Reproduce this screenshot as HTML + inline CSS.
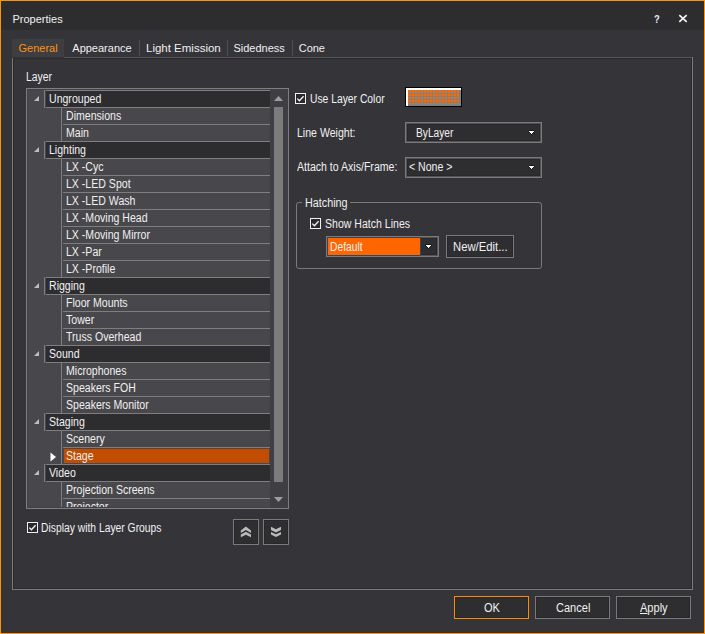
<!DOCTYPE html>
<html><head><meta charset="utf-8"><style>
html,body{margin:0;padding:0;width:705px;height:634px;overflow:hidden;background:#353439}
.a{position:absolute}
.t{position:absolute;white-space:nowrap;font-family:"Liberation Sans", sans-serif}
</style></head><body>
<div class="a" style="left:0px;top:0px;width:705px;height:634px;background:#ff9400;"></div><div class="a" style="left:1px;top:1px;width:703px;height:632px;background:#353439;"></div><div class="a" style="left:1px;top:1px;width:703px;height:29px;background:#2d2d30;"></div><div class="t" style="left:12.5px;top:9.36px;font-size:11px;line-height:20px;color:#f0f0f0;">Properties</div><div class="t" style="left:653.6px;top:9.36px;font-size:11px;line-height:20px;color:#e6ecf4;transform:scaleX(0.85);transform-origin:0 0;font-weight:bold;">?</div><svg class="a" style="left:678px;top:14px" width="10" height="9"><path d="M1.3 1.1L8.7 7.9M8.7 1.1L1.3 7.9" stroke="#f6f6f6" stroke-width="1.7"/></svg><div class="a" style="left:12px;top:39px;width:52px;height:18px;background:#3e3d42;"></div><div class="t" style="left:18.5px;top:38.36px;font-size:11px;line-height:20px;color:#ff920c;">General</div><div class="t" style="left:72.3px;top:38.36px;font-size:11px;line-height:20px;color:#f0f0f0;">Appearance</div><div class="t" style="left:146.4px;top:38.36px;font-size:11px;line-height:20px;color:#f0f0f0;transform:scaleX(1.045);transform-origin:0 0;">Light Emission</div><div class="t" style="left:233.4px;top:38.36px;font-size:11px;line-height:20px;color:#f0f0f0;">Sidedness</div><div class="t" style="left:298.7px;top:38.36px;font-size:11px;line-height:20px;color:#f0f0f0;">Cone</div><div class="a" style="left:139px;top:40px;width:1px;height:16px;background:#4b4b50;"></div><div class="a" style="left:227px;top:40px;width:1px;height:16px;background:#4b4b50;"></div><div class="a" style="left:292px;top:40px;width:1px;height:16px;background:#4b4b50;"></div><div class="a" style="left:64px;top:57px;width:628px;height:1px;background:#55545a;"></div><div class="a" style="left:12px;top:58px;width:1px;height:532px;background:#7a7a7a;"></div><div class="a" style="left:12px;top:589px;width:681px;height:1px;background:#7a7a7a;"></div><div class="a" style="left:692px;top:57px;width:1px;height:533px;background:#7a7a7a;"></div><div class="a" style="left:13px;top:58px;width:679px;height:1px;background:#2a2a2d;"></div><div class="a" style="left:13px;top:58px;width:1px;height:531px;background:#2a2a2d;"></div><div class="a" style="left:691px;top:58px;width:1px;height:531px;background:#2a2a2d;"></div><div class="a" style="left:13px;top:588px;width:679px;height:1px;background:#2a2a2d;"></div><div class="t" style="left:26.3px;top:67.03px;font-size:12px;line-height:20px;color:#f0f0f0;transform:scaleX(0.86);transform-origin:0 0;">Layer</div><div class="a" style="left:26px;top:88px;width:263px;height:421px;background:#7e7e7e;"></div><div class="a" style="left:27px;top:89px;width:261px;height:419px;background:#424145;"></div><div class="a" style="left:28px;top:90px;width:259px;height:417px;background:#48474b;"></div><div class="a" style="left:270px;top:89px;width:18px;height:419px;background:#3f3e43;"></div><svg class="a" style="left:273px;top:95px" width="11" height="7"><path d="M1 6L5.5 1L10 6Z" fill="#9e9e9e"/></svg><svg class="a" style="left:273px;top:496px" width="11" height="7"><path d="M1 1L5.5 6L10 1Z" fill="#9e9e9e"/></svg><div class="a" style="left:274px;top:107px;width:9px;height:375px;background:#7c7c7c;"></div><div class="a" style="left:28px;top:90px;width:242px;height:417px;overflow:hidden"><div class="a" style="left:16px;top:0px;width:1px;height:18px;background:#7e7e7e"></div><div class="a" style="left:18px;top:17px;width:224px;height:1px;background:#7e7e7e"></div><div class="a" style="left:18px;top:0px;width:224px;height:1px;background:#7e7e7e"></div><div class="a" style="left:18px;top:1px;width:224px;height:16px;background:#2d2d30"></div><svg class="a" style="left:5px;top:5px" width="7" height="7"><path d="M6 1L6 6L1 6Z" fill="#bdbdbd"/></svg><div class="t" style="left:21.200000000000003px;top:-0.97px;font-size:12px;line-height:20px;color:#f0f0f0;transform:scaleX(0.88);transform-origin:0 0">Ungrouped</div><div class="a" style="left:33px;top:17px;width:1px;height:17px;background:#7e7e7e"></div><div class="a" style="left:35px;top:17px;width:207px;height:1px;background:#7e7e7e"></div><div class="t" style="left:37.900000000000006px;top:16.03px;font-size:12px;line-height:20px;color:#f0f0f0;transform:scaleX(0.88);transform-origin:0 0">Dimensions</div><div class="a" style="left:33px;top:34px;width:1px;height:17px;background:#7e7e7e"></div><div class="a" style="left:35px;top:34px;width:207px;height:1px;background:#7e7e7e"></div><div class="t" style="left:37.900000000000006px;top:33.03px;font-size:12px;line-height:20px;color:#f0f0f0;transform:scaleX(0.88);transform-origin:0 0">Main</div><div class="a" style="left:16px;top:51px;width:1px;height:18px;background:#7e7e7e"></div><div class="a" style="left:18px;top:68px;width:224px;height:1px;background:#7e7e7e"></div><div class="a" style="left:18px;top:51px;width:224px;height:1px;background:#7e7e7e"></div><div class="a" style="left:18px;top:52px;width:224px;height:16px;background:#2d2d30"></div><svg class="a" style="left:5px;top:56px" width="7" height="7"><path d="M6 1L6 6L1 6Z" fill="#bdbdbd"/></svg><div class="t" style="left:21.200000000000003px;top:50.03px;font-size:12px;line-height:20px;color:#f0f0f0;transform:scaleX(0.88);transform-origin:0 0">Lighting</div><div class="a" style="left:33px;top:68px;width:1px;height:17px;background:#7e7e7e"></div><div class="a" style="left:35px;top:68px;width:207px;height:1px;background:#7e7e7e"></div><div class="t" style="left:37.900000000000006px;top:67.03px;font-size:12px;line-height:20px;color:#f0f0f0;transform:scaleX(0.88);transform-origin:0 0">LX -Cyc</div><div class="a" style="left:33px;top:85px;width:1px;height:17px;background:#7e7e7e"></div><div class="a" style="left:35px;top:85px;width:207px;height:1px;background:#7e7e7e"></div><div class="t" style="left:37.900000000000006px;top:84.03px;font-size:12px;line-height:20px;color:#f0f0f0;transform:scaleX(0.88);transform-origin:0 0">LX -LED Spot</div><div class="a" style="left:33px;top:102px;width:1px;height:17px;background:#7e7e7e"></div><div class="a" style="left:35px;top:102px;width:207px;height:1px;background:#7e7e7e"></div><div class="t" style="left:37.900000000000006px;top:101.03px;font-size:12px;line-height:20px;color:#f0f0f0;transform:scaleX(0.88);transform-origin:0 0">LX -LED Wash</div><div class="a" style="left:33px;top:119px;width:1px;height:17px;background:#7e7e7e"></div><div class="a" style="left:35px;top:119px;width:207px;height:1px;background:#7e7e7e"></div><div class="t" style="left:37.900000000000006px;top:118.03px;font-size:12px;line-height:20px;color:#f0f0f0;transform:scaleX(0.88);transform-origin:0 0">LX -Moving Head</div><div class="a" style="left:33px;top:136px;width:1px;height:17px;background:#7e7e7e"></div><div class="a" style="left:35px;top:136px;width:207px;height:1px;background:#7e7e7e"></div><div class="t" style="left:37.900000000000006px;top:135.03px;font-size:12px;line-height:20px;color:#f0f0f0;transform:scaleX(0.88);transform-origin:0 0">LX -Moving Mirror</div><div class="a" style="left:33px;top:153px;width:1px;height:17px;background:#7e7e7e"></div><div class="a" style="left:35px;top:153px;width:207px;height:1px;background:#7e7e7e"></div><div class="t" style="left:37.900000000000006px;top:152.03px;font-size:12px;line-height:20px;color:#f0f0f0;transform:scaleX(0.88);transform-origin:0 0">LX -Par</div><div class="a" style="left:33px;top:170px;width:1px;height:17px;background:#7e7e7e"></div><div class="a" style="left:35px;top:170px;width:207px;height:1px;background:#7e7e7e"></div><div class="t" style="left:37.900000000000006px;top:169.03px;font-size:12px;line-height:20px;color:#f0f0f0;transform:scaleX(0.88);transform-origin:0 0">LX -Profile</div><div class="a" style="left:16px;top:187px;width:1px;height:18px;background:#7e7e7e"></div><div class="a" style="left:18px;top:204px;width:224px;height:1px;background:#7e7e7e"></div><div class="a" style="left:18px;top:187px;width:224px;height:1px;background:#7e7e7e"></div><div class="a" style="left:18px;top:188px;width:224px;height:16px;background:#2d2d30"></div><svg class="a" style="left:5px;top:192px" width="7" height="7"><path d="M6 1L6 6L1 6Z" fill="#bdbdbd"/></svg><div class="t" style="left:21.200000000000003px;top:186.03px;font-size:12px;line-height:20px;color:#f0f0f0;transform:scaleX(0.88);transform-origin:0 0">Rigging</div><div class="a" style="left:33px;top:204px;width:1px;height:17px;background:#7e7e7e"></div><div class="a" style="left:35px;top:204px;width:207px;height:1px;background:#7e7e7e"></div><div class="t" style="left:37.900000000000006px;top:203.03px;font-size:12px;line-height:20px;color:#f0f0f0;transform:scaleX(0.88);transform-origin:0 0">Floor Mounts</div><div class="a" style="left:33px;top:221px;width:1px;height:17px;background:#7e7e7e"></div><div class="a" style="left:35px;top:221px;width:207px;height:1px;background:#7e7e7e"></div><div class="t" style="left:37.900000000000006px;top:220.03px;font-size:12px;line-height:20px;color:#f0f0f0;transform:scaleX(0.88);transform-origin:0 0">Tower</div><div class="a" style="left:33px;top:238px;width:1px;height:17px;background:#7e7e7e"></div><div class="a" style="left:35px;top:238px;width:207px;height:1px;background:#7e7e7e"></div><div class="t" style="left:37.900000000000006px;top:237.03px;font-size:12px;line-height:20px;color:#f0f0f0;transform:scaleX(0.88);transform-origin:0 0">Truss Overhead</div><div class="a" style="left:16px;top:255px;width:1px;height:18px;background:#7e7e7e"></div><div class="a" style="left:18px;top:272px;width:224px;height:1px;background:#7e7e7e"></div><div class="a" style="left:18px;top:255px;width:224px;height:1px;background:#7e7e7e"></div><div class="a" style="left:18px;top:256px;width:224px;height:16px;background:#2d2d30"></div><svg class="a" style="left:5px;top:260px" width="7" height="7"><path d="M6 1L6 6L1 6Z" fill="#bdbdbd"/></svg><div class="t" style="left:21.200000000000003px;top:254.03px;font-size:12px;line-height:20px;color:#f0f0f0;transform:scaleX(0.88);transform-origin:0 0">Sound</div><div class="a" style="left:33px;top:272px;width:1px;height:17px;background:#7e7e7e"></div><div class="a" style="left:35px;top:272px;width:207px;height:1px;background:#7e7e7e"></div><div class="t" style="left:37.900000000000006px;top:271.03px;font-size:12px;line-height:20px;color:#f0f0f0;transform:scaleX(0.88);transform-origin:0 0">Microphones</div><div class="a" style="left:33px;top:289px;width:1px;height:17px;background:#7e7e7e"></div><div class="a" style="left:35px;top:289px;width:207px;height:1px;background:#7e7e7e"></div><div class="t" style="left:37.900000000000006px;top:288.03px;font-size:12px;line-height:20px;color:#f0f0f0;transform:scaleX(0.88);transform-origin:0 0">Speakers FOH</div><div class="a" style="left:33px;top:306px;width:1px;height:17px;background:#7e7e7e"></div><div class="a" style="left:35px;top:306px;width:207px;height:1px;background:#7e7e7e"></div><div class="t" style="left:37.900000000000006px;top:305.03px;font-size:12px;line-height:20px;color:#f0f0f0;transform:scaleX(0.88);transform-origin:0 0">Speakers Monitor</div><div class="a" style="left:16px;top:323px;width:1px;height:18px;background:#7e7e7e"></div><div class="a" style="left:18px;top:340px;width:224px;height:1px;background:#7e7e7e"></div><div class="a" style="left:18px;top:323px;width:224px;height:1px;background:#7e7e7e"></div><div class="a" style="left:18px;top:324px;width:224px;height:16px;background:#2d2d30"></div><svg class="a" style="left:5px;top:328px" width="7" height="7"><path d="M6 1L6 6L1 6Z" fill="#bdbdbd"/></svg><div class="t" style="left:21.200000000000003px;top:322.03px;font-size:12px;line-height:20px;color:#f0f0f0;transform:scaleX(0.88);transform-origin:0 0">Staging</div><div class="a" style="left:33px;top:340px;width:1px;height:17px;background:#7e7e7e"></div><div class="a" style="left:35px;top:340px;width:207px;height:1px;background:#7e7e7e"></div><div class="t" style="left:37.900000000000006px;top:339.03px;font-size:12px;line-height:20px;color:#f0f0f0;transform:scaleX(0.88);transform-origin:0 0">Scenery</div><div class="a" style="left:33px;top:357px;width:1px;height:17px;background:#7e7e7e"></div><div class="a" style="left:35px;top:357px;width:207px;height:1px;background:#7e7e7e"></div><div class="a" style="left:36px;top:359px;width:205px;height:14px;background:#c24c00"></div><svg class="a" style="left:22px;top:362px" width="7" height="10"><path d="M0.5 0.5L6 5L0.5 9.5Z" fill="#ffffff"/></svg><div class="t" style="left:37.900000000000006px;top:356.03px;font-size:12px;line-height:20px;color:#f0f0f0;transform:scaleX(0.88);transform-origin:0 0">Stage</div><div class="a" style="left:16px;top:374px;width:1px;height:18px;background:#7e7e7e"></div><div class="a" style="left:18px;top:391px;width:224px;height:1px;background:#7e7e7e"></div><div class="a" style="left:18px;top:374px;width:224px;height:1px;background:#7e7e7e"></div><div class="a" style="left:18px;top:375px;width:224px;height:16px;background:#2d2d30"></div><svg class="a" style="left:5px;top:379px" width="7" height="7"><path d="M6 1L6 6L1 6Z" fill="#bdbdbd"/></svg><div class="t" style="left:21.200000000000003px;top:373.03px;font-size:12px;line-height:20px;color:#f0f0f0;transform:scaleX(0.88);transform-origin:0 0">Video</div><div class="a" style="left:33px;top:391px;width:1px;height:17px;background:#7e7e7e"></div><div class="a" style="left:35px;top:391px;width:207px;height:1px;background:#7e7e7e"></div><div class="t" style="left:37.900000000000006px;top:390.03px;font-size:12px;line-height:20px;color:#f0f0f0;transform:scaleX(0.88);transform-origin:0 0">Projection Screens</div><div class="a" style="left:33px;top:408px;width:1px;height:17px;background:#7e7e7e"></div><div class="a" style="left:35px;top:408px;width:207px;height:1px;background:#7e7e7e"></div><div class="t" style="left:37.900000000000006px;top:407.03px;font-size:12px;line-height:20px;color:#f0f0f0;transform:scaleX(0.88);transform-origin:0 0">Projector</div></div><svg class="a" style="left:27px;top:522px" width="11" height="11"><rect x="0.5" y="0.5" width="10" height="10" fill="#2a2a2d" stroke="#f0f0f0" stroke-width="1"/><path d="M2.3 5.6L4.4 7.7L8.6 3.2" fill="none" stroke="#f4f4f4" stroke-width="1.3"/></svg><div class="t" style="left:41.4px;top:518.03px;font-size:12px;line-height:20px;color:#f0f0f0;transform:scaleX(0.86);transform-origin:0 0;">Display with Layer Groups</div><div class="a" style="left:233px;top:519px;width:26px;height:26px;background:#7a7a7a;"></div><div class="a" style="left:234px;top:520px;width:24px;height:24px;background:#28282a;"></div><div class="a" style="left:235px;top:521px;width:22px;height:22px;background:#2e2e30;"></div><div class="a" style="left:263px;top:519px;width:26px;height:26px;background:#7a7a7a;"></div><div class="a" style="left:264px;top:520px;width:24px;height:24px;background:#28282a;"></div><div class="a" style="left:265px;top:521px;width:22px;height:22px;background:#2e2e30;"></div><svg class="a" style="left:0;top:0" width="300" height="560"><g fill="#bababa"><polygon points="240.8,530.4 245.9,526.6 251,530.4 251,533 245.9,530 240.8,533"/><polygon points="240.8,534.6 245.9,531.8 251,534.6 251,537.2 245.9,534.8 240.8,537.2"/><polygon points="271,526.8 275.9,529.2 281,526.8 281,530 275.9,532.6 271,530"/><polygon points="271,532 275.9,534.3 281,532 281,534.6 275.9,537 271,534.6"/></g></svg><svg class="a" style="left:295px;top:93px" width="11" height="11"><rect x="0.5" y="0.5" width="10" height="10" fill="#2a2a2d" stroke="#f0f0f0" stroke-width="1"/><path d="M2.3 5.6L4.4 7.7L8.6 3.2" fill="none" stroke="#f4f4f4" stroke-width="1.3"/></svg><div class="t" style="left:309.8px;top:89.03px;font-size:12px;line-height:20px;color:#f0f0f0;transform:scaleX(0.86);transform-origin:0 0;">Use Layer Color</div><div class="a" style="left:405px;top:87px;width:57px;height:20px;background:#000000;"></div><div class="a" style="left:406px;top:88px;width:55px;height:18px;background:#808080;"></div><div class="a" style="left:406px;top:88px;width:55px;height:2px;background:#ffffff;"></div><div class="a" style="left:406px;top:88px;width:2px;height:18px;background:#ffffff;"></div><svg class="a" style="left:408px;top:90px" width="51" height="14" shape-rendering="crispEdges"><g fill="#ff6a00"><rect x="0" y="0" width="3" height="3"/><rect x="0" y="4" width="3" height="2"/><rect x="0" y="7" width="3" height="2"/><rect x="0" y="10" width="3" height="2"/><rect x="0" y="13" width="3" height="1"/><rect x="4" y="0" width="2" height="3"/><rect x="4" y="4" width="2" height="2"/><rect x="4" y="7" width="2" height="2"/><rect x="4" y="10" width="2" height="2"/><rect x="4" y="13" width="2" height="1"/><rect x="7" y="0" width="2" height="3"/><rect x="7" y="4" width="2" height="2"/><rect x="7" y="7" width="2" height="2"/><rect x="7" y="10" width="2" height="2"/><rect x="7" y="13" width="2" height="1"/><rect x="10" y="0" width="2" height="3"/><rect x="10" y="4" width="2" height="2"/><rect x="10" y="7" width="2" height="2"/><rect x="10" y="10" width="2" height="2"/><rect x="10" y="13" width="2" height="1"/><rect x="13" y="0" width="2" height="3"/><rect x="13" y="4" width="2" height="2"/><rect x="13" y="7" width="2" height="2"/><rect x="13" y="10" width="2" height="2"/><rect x="13" y="13" width="2" height="1"/><rect x="16" y="0" width="2" height="3"/><rect x="16" y="4" width="2" height="2"/><rect x="16" y="7" width="2" height="2"/><rect x="16" y="10" width="2" height="2"/><rect x="16" y="13" width="2" height="1"/><rect x="19" y="0" width="2" height="3"/><rect x="19" y="4" width="2" height="2"/><rect x="19" y="7" width="2" height="2"/><rect x="19" y="10" width="2" height="2"/><rect x="19" y="13" width="2" height="1"/><rect x="22" y="0" width="2" height="3"/><rect x="22" y="4" width="2" height="2"/><rect x="22" y="7" width="2" height="2"/><rect x="22" y="10" width="2" height="2"/><rect x="22" y="13" width="2" height="1"/><rect x="25" y="0" width="2" height="3"/><rect x="25" y="4" width="2" height="2"/><rect x="25" y="7" width="2" height="2"/><rect x="25" y="10" width="2" height="2"/><rect x="25" y="13" width="2" height="1"/><rect x="28" y="0" width="2" height="3"/><rect x="28" y="4" width="2" height="2"/><rect x="28" y="7" width="2" height="2"/><rect x="28" y="10" width="2" height="2"/><rect x="28" y="13" width="2" height="1"/><rect x="31" y="0" width="2" height="3"/><rect x="31" y="4" width="2" height="2"/><rect x="31" y="7" width="2" height="2"/><rect x="31" y="10" width="2" height="2"/><rect x="31" y="13" width="2" height="1"/><rect x="34" y="0" width="2" height="3"/><rect x="34" y="4" width="2" height="2"/><rect x="34" y="7" width="2" height="2"/><rect x="34" y="10" width="2" height="2"/><rect x="34" y="13" width="2" height="1"/><rect x="37" y="0" width="2" height="3"/><rect x="37" y="4" width="2" height="2"/><rect x="37" y="7" width="2" height="2"/><rect x="37" y="10" width="2" height="2"/><rect x="37" y="13" width="2" height="1"/><rect x="40" y="0" width="2" height="3"/><rect x="40" y="4" width="2" height="2"/><rect x="40" y="7" width="2" height="2"/><rect x="40" y="10" width="2" height="2"/><rect x="40" y="13" width="2" height="1"/><rect x="43" y="0" width="2" height="3"/><rect x="43" y="4" width="2" height="2"/><rect x="43" y="7" width="2" height="2"/><rect x="43" y="10" width="2" height="2"/><rect x="43" y="13" width="2" height="1"/><rect x="46" y="0" width="2" height="3"/><rect x="46" y="4" width="2" height="2"/><rect x="46" y="7" width="2" height="2"/><rect x="46" y="10" width="2" height="2"/><rect x="46" y="13" width="2" height="1"/><rect x="49" y="0" width="2" height="3"/><rect x="49" y="4" width="2" height="2"/><rect x="49" y="7" width="2" height="2"/><rect x="49" y="10" width="2" height="2"/><rect x="49" y="13" width="2" height="1"/></g></svg><div class="t" style="left:296.5px;top:123.03px;font-size:12px;line-height:20px;color:#f0f0f0;transform:scaleX(0.88);transform-origin:0 0;">Line Weight:</div><div class="t" style="left:296.5px;top:157.03px;font-size:12px;line-height:20px;color:#f0f0f0;transform:scaleX(0.88);transform-origin:0 0;">Attach to Axis/Frame:</div><div class="a" style="left:0px;top:0px;width:0px;height:0px;"></div><div class="a" style="left:405px;top:122px;width:137px;height:21px;background:#7a7a7a;"></div><div class="a" style="left:406px;top:123px;width:135px;height:19px;background:#535257;"></div><div class="a" style="left:407px;top:124px;width:133px;height:17px;background:#28282a;"></div><div class="a" style="left:408px;top:125px;width:131px;height:15px;background:#2e2e30;"></div><svg class="a" style="left:528px;top:130px" width="7" height="5" shape-rendering="crispEdges"><rect x="1" y="0" width="5" height="1" fill="#161618"/><rect x="0" y="1" width="1" height="1" fill="#161618"/><rect x="6" y="1" width="1" height="1" fill="#161618"/><rect x="1" y="2" width="1" height="1" fill="#161618"/><rect x="5" y="2" width="1" height="1" fill="#161618"/><rect x="2" y="3" width="1" height="1" fill="#161618"/><rect x="4" y="3" width="1" height="1" fill="#161618"/><rect x="3" y="4" width="1" height="1" fill="#161618"/><rect x="1" y="1" width="5" height="1" fill="#fff"/><rect x="2" y="2" width="3" height="1" fill="#fff"/><rect x="3" y="3" width="1" height="1" fill="#fff"/></svg><div class="t" style="left:416.4px;top:123.03px;font-size:12px;line-height:20px;color:#f0f0f0;transform:scaleX(0.85);transform-origin:0 0;">ByLayer</div><div class="a" style="left:405px;top:157px;width:137px;height:21px;background:#7a7a7a;"></div><div class="a" style="left:406px;top:158px;width:135px;height:19px;background:#535257;"></div><div class="a" style="left:407px;top:159px;width:133px;height:17px;background:#28282a;"></div><div class="a" style="left:408px;top:160px;width:131px;height:15px;background:#2e2e30;"></div><svg class="a" style="left:528px;top:165px" width="7" height="5" shape-rendering="crispEdges"><rect x="1" y="0" width="5" height="1" fill="#161618"/><rect x="0" y="1" width="1" height="1" fill="#161618"/><rect x="6" y="1" width="1" height="1" fill="#161618"/><rect x="1" y="2" width="1" height="1" fill="#161618"/><rect x="5" y="2" width="1" height="1" fill="#161618"/><rect x="2" y="3" width="1" height="1" fill="#161618"/><rect x="4" y="3" width="1" height="1" fill="#161618"/><rect x="3" y="4" width="1" height="1" fill="#161618"/><rect x="1" y="1" width="5" height="1" fill="#fff"/><rect x="2" y="2" width="3" height="1" fill="#fff"/><rect x="3" y="3" width="1" height="1" fill="#fff"/></svg><div class="t" style="left:409px;top:157.03px;font-size:12px;line-height:20px;color:#f0f0f0;transform:scaleX(0.88);transform-origin:0 0;">&lt; None &gt;</div><div class="a" style="left:296px;top:202px;width:246px;height:67px;border:1px solid #7a7a7a;border-radius:3px;box-sizing:border-box"></div><div class="a" style="left:302px;top:200px;width:48px;height:5px;background:#353439;"></div><div class="t" style="left:305px;top:193.03px;font-size:12px;line-height:20px;color:#f0f0f0;transform:scaleX(0.9);transform-origin:0 0;">Hatching</div><svg class="a" style="left:310px;top:218px" width="11" height="11"><rect x="0.5" y="0.5" width="10" height="10" fill="#2a2a2d" stroke="#f0f0f0" stroke-width="1"/><path d="M2.3 5.6L4.4 7.7L8.6 3.2" fill="none" stroke="#f4f4f4" stroke-width="1.3"/></svg><div class="t" style="left:324.5px;top:214.03px;font-size:12px;line-height:20px;color:#f0f0f0;transform:scaleX(0.88);transform-origin:0 0;">Show Hatch Lines</div><div class="a" style="left:326px;top:236px;width:113px;height:21px;background:#7a7a7a;"></div><div class="a" style="left:327px;top:237px;width:111px;height:19px;background:#535257;"></div><div class="a" style="left:328px;top:238px;width:109px;height:17px;background:#28282a;"></div><div class="a" style="left:329px;top:239px;width:107px;height:15px;background:#2e2e30;"></div><svg class="a" style="left:425px;top:244px" width="7" height="5" shape-rendering="crispEdges"><rect x="1" y="0" width="5" height="1" fill="#161618"/><rect x="0" y="1" width="1" height="1" fill="#161618"/><rect x="6" y="1" width="1" height="1" fill="#161618"/><rect x="1" y="2" width="1" height="1" fill="#161618"/><rect x="5" y="2" width="1" height="1" fill="#161618"/><rect x="2" y="3" width="1" height="1" fill="#161618"/><rect x="4" y="3" width="1" height="1" fill="#161618"/><rect x="3" y="4" width="1" height="1" fill="#161618"/><rect x="1" y="1" width="5" height="1" fill="#fff"/><rect x="2" y="2" width="3" height="1" fill="#fff"/><rect x="3" y="3" width="1" height="1" fill="#fff"/></svg><div class="a" style="left:327px;top:237px;width:94px;height:19px;background:#3a4350;"></div><div class="a" style="left:328px;top:238px;width:92px;height:17px;background:#ff6600;"></div><div class="t" style="left:330.2px;top:237.03px;font-size:12px;line-height:20px;color:#f0f0f0;transform:scaleX(0.86);transform-origin:0 0;">Default</div><div class="a" style="left:446px;top:235px;width:68px;height:23px;background:#7a7a7a;"></div><div class="a" style="left:447px;top:236px;width:66px;height:21px;background:#28282a;"></div><div class="a" style="left:448px;top:237px;width:64px;height:19px;background:#2e2e30;"></div><div class="t" style="left:452.9px;top:237.03px;font-size:12px;line-height:20px;color:#f0f0f0;transform:scaleX(0.94);transform-origin:0 0;">New/Edit...</div><div class="a" style="left:454px;top:596px;width:75px;height:23px;background:#ff8c00;"></div><div class="a" style="left:455px;top:597px;width:73px;height:21px;background:#28282a;"></div><div class="a" style="left:456px;top:598px;width:71px;height:19px;background:#2e2e30;"></div><div class="t" style="left:483.6px;top:598.03px;font-size:12px;line-height:20px;color:#f0f0f0;transform:scaleX(0.92);transform-origin:0 0;">OK</div><div class="a" style="left:535px;top:596px;width:75px;height:23px;background:#7a7a7a;"></div><div class="a" style="left:536px;top:597px;width:73px;height:21px;background:#28282a;"></div><div class="a" style="left:537px;top:598px;width:71px;height:19px;background:#2e2e30;"></div><div class="t" style="left:555.6px;top:598.03px;font-size:12px;line-height:20px;color:#f0f0f0;transform:scaleX(0.92);transform-origin:0 0;">Cancel</div><div class="a" style="left:616px;top:596px;width:75px;height:23px;background:#7a7a7a;"></div><div class="a" style="left:617px;top:597px;width:73px;height:21px;background:#28282a;"></div><div class="a" style="left:618px;top:598px;width:71px;height:19px;background:#2e2e30;"></div><div class="t" style="left:640px;top:598.03px;font-size:12px;line-height:20px;color:#f0f0f0;transform:scaleX(0.92);transform-origin:0 0;"><u>A</u>pply</div>
</body></html>
